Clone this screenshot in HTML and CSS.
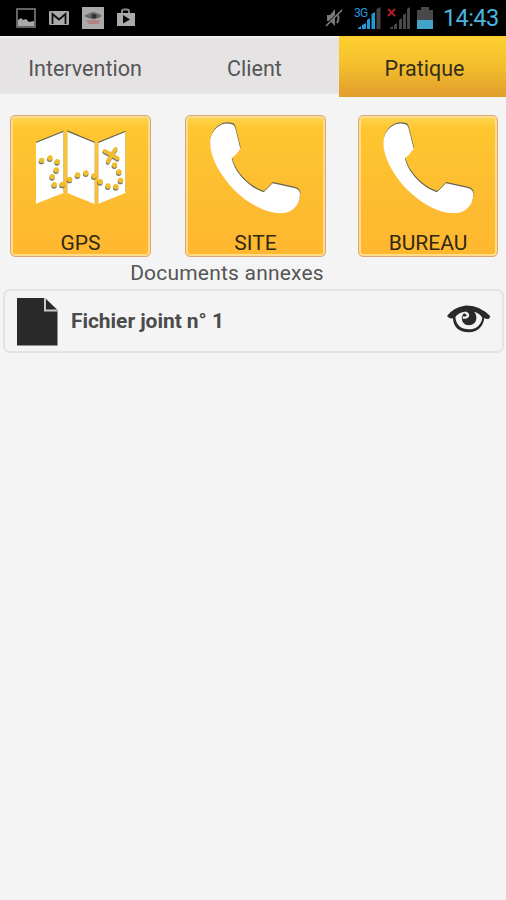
FILE: index.html
```
<!DOCTYPE html>
<html lang="fr">
<head>
<meta charset="utf-8">
<title>Pratique</title>
<link rel="stylesheet" href="styles.css">
</head>
<body>
<svg class="defs" width="0" height="0">
  <defs>
    <path id="handset" d="M107 99 Q114 69 143 56 Q158 51 175 57 Q181 60 184 77 L197 129 Q186 146 171 158 C179 198 218 243 267 260 L294 233 L359 247 Q374 250 376 264 Q376 293 355 311 Q341 323 315 323 C271 322 218 292 178 252 C136 208 101 149 107 99Z"/>
    <path id="map" d="M108 114 L190 81 V264 L108 296Z M202 80 L284 114 V297 L202 264Z M295 114 L376 81 V264 L295 296Z"/>
    <g id="trail">
      <circle cx="125" cy="166" r="8"/><circle cx="150" cy="159" r="8"/><circle cx="172" cy="170" r="8"/><circle cx="169" cy="195" r="8"/><circle cx="157" cy="215" r="8"/><circle cx="163" cy="239" r="8"/><circle cx="187" cy="238" r="8"/><circle cx="209" cy="223" r="8"/><circle cx="233" cy="210" r="8"/><circle cx="258" cy="204" r="8"/><circle cx="282" cy="213" r="8"/><circle cx="301" cy="230" r="8"/><circle cx="324" cy="243" r="8"/><circle cx="348" cy="245" r="8"/><circle cx="362" cy="226" r="8"/><circle cx="357" cy="201" r="8"/><circle cx="344" cy="180" r="8"/>
    </g>
    <path id="cross" d="M314 138 Q332 147 353 160 M347 132 Q335 146 324 169" fill="none" stroke-width="12" stroke-linecap="round"/>
  </defs>
</svg>
<header class="status">
  <div class="notices">
    <svg width="20" height="20" viewBox="0 0 20 20"><path d="M1 1H19V19H1Z" fill="#000" stroke="#858585" stroke-width="1.5"/><path d="M2 18V12L5 10L7 12L10 11L13 14L18 13V18Z" fill="#aaa"/></svg>
    <svg width="20" height="16" viewBox="0 0 20 16"><rect y="1" width="20" height="14" rx="1" fill="#aaa"/><path d="M3.500 14V4L10 9.500L16.500 4V14" fill="none" stroke="#111" stroke-width="1.8"/></svg>
    <svg width="22" height="22" viewBox="0 0 22 22"><rect width="22" height="22" fill="#aaa"/><path d="M2 9Q6 7 10 5Q15 5 20 9Q15 13 10 12Q6 11 2 9Z" fill="#666"/><circle cx="12" cy="9" r="2.500" fill="#333"/><path d="M6 9Q12 3 18 9" fill="none" stroke="#777"/><path d="M5 14H18M6 16H17" stroke="#b87878" stroke-width="1.6"/></svg>
    <svg width="20" height="20" viewBox="0 0 20 20"><path d="M6 6V3Q6 1.500 8 1.500H11Q13 1.500 13 3V6" fill="none" stroke="#888" stroke-width="2"/><path d="M1 5H19V18H1Z" fill="#aaa"/><path d="M7 7L14 11.500L7 15.500Z" fill="#090909"/></svg>
  </div>
  <div class="system">
    <svg width="20" height="20" viewBox="0 0 20 20"><path d="M3 7H6L11 1V18L6 13H3Z" fill="#777"/><path d="M13 6Q16 10 13 15" fill="none" stroke="#777" stroke-width="2"/><path d="M1 18L18 2" stroke="#000" stroke-width="2"/><path d="M2 18L18 2" stroke="#888" stroke-width="1.5"/></svg>
    <div class="signal"><span class="network">3G</span><svg width="28" height="24" viewBox="0 0 28 24"><path d="M5 22L8 20V23H5ZM9 19L13 17V23H9ZM14 14L17 12V23H14ZM18.500 8L22 6V23H18.500Z" fill="#2299d9"/><path d="M23.500 3L27.500 1V23H23.500Z" fill="#444"/></svg></div>
    <svg class="nosignal" width="24" height="24" viewBox="0 0 24 24"><path d="M3 22L6 20V23H3ZM7 19L10 17V23H7ZM12 14L15 12V23H12ZM16 9L19 7V23H16ZM20 3L23 1V23H20Z" fill="#494949"/><path d="M1 3L8 10M8 3L1 10" stroke="#b51b20" stroke-width="2"/></svg>
    <svg class="battery" width="16" height="22" viewBox="0 0 16 22"><path d="M0 3H4V0H12V3H16V14H0Z" fill="#484848"/><path d="M0 13H16V22H0Z" fill="#43a3c8"/></svg>
    <span class="clock">14:43</span>
  </div>
</header>
<nav class="tabs">
  <a class="tab">Intervention</a>
  <a class="tab">Client</a>
  <a class="tab active">Pratique</a>
</nav>
<main>
  <section class="tiles">
    <a class="tile"><svg class="art" viewBox="30 30 423 426"><use href="#map" y="-4" fill="#666653"/><use href="#map" fill="#fff"/><use href="#trail" x="-1" y="4" fill="#737568"/><use href="#cross" x="-1" y="4" stroke="#737568"/><use href="#trail" fill="#f0bd30"/><use href="#cross" stroke="#f0bd30"/></svg><span>GPS</span></a>
    <a class="tile"><svg class="art" viewBox="31 28 423 426"><use href="#handset" x="1" y="-4" fill="#666653"/><use href="#handset" fill="#fff"/></svg><span>SITE</span></a>
    <a class="tile"><svg class="art" viewBox="27 28 423 426"><use href="#handset" x="1" y="-4" fill="#666653"/><use href="#handset" fill="#fff"/></svg><span>BUREAU</span></a>
  </section>
  <h2>Documents annexes</h2>
  <article class="file">
    <svg width="41" height="49" viewBox="0 0 41 49"><path d="M0 1H28L40.500 13V48.500H0Z" fill="#292929"/><path d="M28 1V13.500H40.500" fill="none" stroke="#c9c9c9" stroke-width="2"/></svg>
    <strong>Fichier joint n° 1</strong>
    <svg class="eye" width="44" height="28" viewBox="583 141 132 84"><path d="M583 174 Q600 149 635 143 Q678 139 713 175 L709 182 Q701 184 695 180 C692 205 675 223 648 223 C618 223 602 207 601 181 Q592 184 583 174Z" fill="#292929"/><path d="M608 178 Q615 163 640 161 Q630 166 627 178 Q628 202 648 202 Q670 200 671 182 Q672 169 664 161 Q681 166 689 179 C685 204 668 214 648 214 C627 214 611 204 608 178Z" fill="#f4f4f4"/><path d="M630 178Q643 181 646 173Q647 166 636 164" fill="none" stroke="#f4f4f4" stroke-width="7"/></svg>
  </article>
</main>
</body>
</html>
```
FILE: styles.css
```
* { box-sizing: border-box; }
body { margin: 0; min-height: 900px; background: #f4f4f4; color: #4b4b4b; font-family: Roboto, "Liberation Sans", sans-serif; }
svg { display: block; flex: none; }
.defs { position: absolute; }
.status { height: 36px; padding: 0 8px 0 16px; background: #000; display: flex; align-items: center; justify-content: space-between; }
.notices { display: flex; align-items: center; gap: 13px; }
.notices svg:nth-child(4) { margin-left: -1px; }
.system { display: flex; align-items: center; }
.signal { position: relative; margin: 0 6px 0 9px; }
.network { position: absolute; left: 1px; top: 2px; color: #2299d9; font-size: 12px; line-height: 10px; letter-spacing: -.8px; }
.nosignal { margin-right: 6px; }
.battery { margin-right: 10px; }
.clock { color: #48b6df; font-size: 23.500px; line-height: 38px; width: 55px; letter-spacing: -.6px; white-space: nowrap; }
.tabs { height: 61px; display: grid; grid-template-columns: 170px 169px 167px; align-items: start; }
.tab { height: 58px; display: flex; justify-content: center; background: #e5e3e4; border-top: 2px solid #f0eff0; font-size: 21.500px; line-height: 62px; color: #555; }
.active { height: 61px; background: linear-gradient(#ffd02f, #f4c02e 45%, #e19d2b); border-top: 1px solid #ffc72a; color: #352e18; line-height: 64px; padding-left: 4px; }
.tiles { height: 160px; padding: 18px 8px 0 10px; display: grid; grid-template-columns: 141px 141px 140px; column-gap: 33px; }
.tile { height: 142px; border: 1px solid #d9a777; border-radius: 5px; background: linear-gradient(#ffd654, #fec62f 9%, #fdbb31 65%, #ffb830); box-shadow: inset 0 0 0 2px #fddd8b; display: flex; flex-direction: column; align-items: center; color: #302912; font-size: 21px; line-height: 24px; }
.tile:nth-child(2) { margin: 0 -1px 0 1px; }
.art { width: 141px; height: 142px; margin: -1px 0 -26px -1px; }
h2 { height: 32px; margin: 0; padding-right: 52px; display: flex; justify-content: center; font-size: 21px; line-height: 33px; letter-spacing: .2px; font-weight: 400; color: #555; }
.file { height: 64px; margin: 0 2px 0 3px; padding: 0 11px 0 12px; border: 2px solid #e4e4e4; border-radius: 7px; display: flex; align-items: center; }
.file strong { margin-left: 13px; flex: 1; font-size: 21px; font-weight: 700; line-height: 24px; letter-spacing: -.05px; }
.eye { margin-top: -4px; }
```
